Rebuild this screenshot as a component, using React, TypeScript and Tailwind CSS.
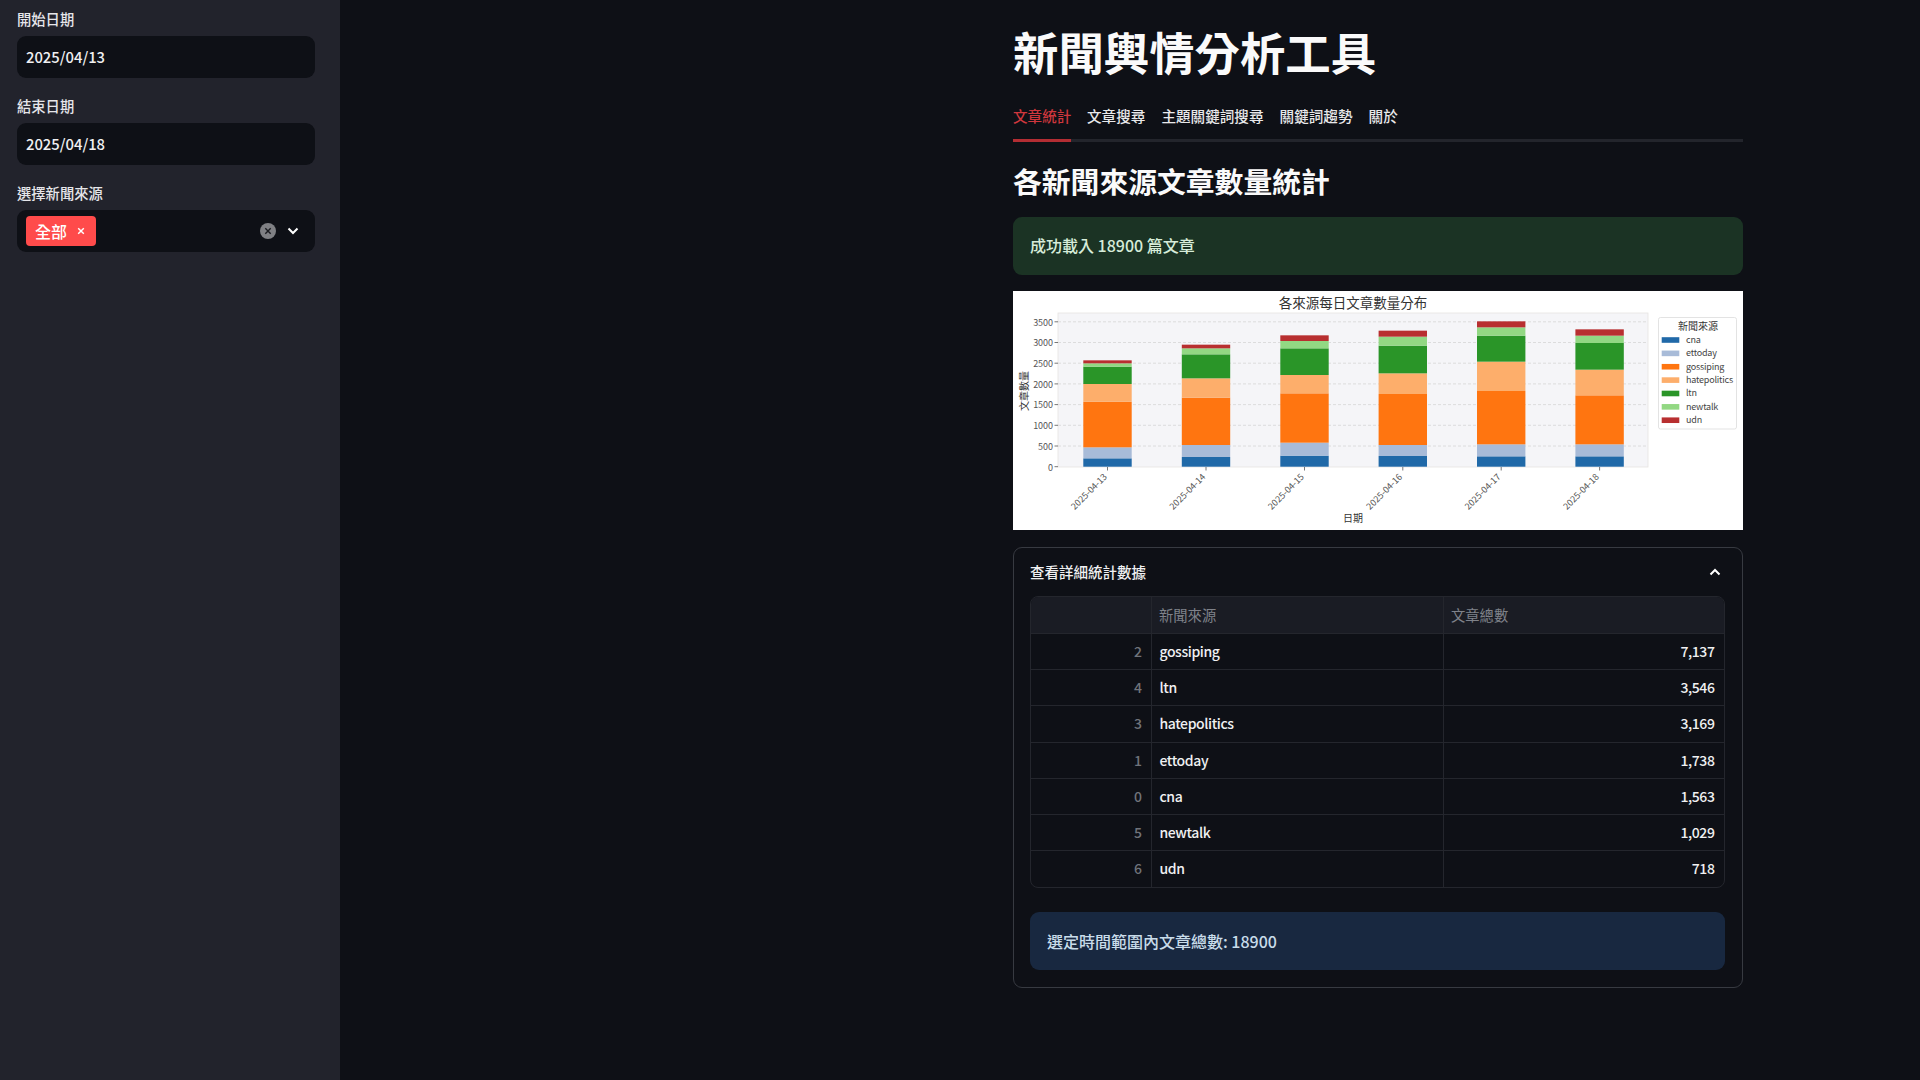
import React from "react";

const COLORS = ["#2069a8", "#a8bbd8", "#ff7510", "#fdae6b", "#2a9528", "#92d883", "#b82f30"];
const NAMES = ["cna", "ettoday", "gossiping", "hatepolitics", "ltn", "newtalk", "udn"];
const BARS = [
  { x: 1083.3, tops: [520, 487, 350, 297, 245, 235, 226], date: "2025-04-13" },
  { x: 1181.8, tops: [516, 480, 338, 280, 208, 190, 179], date: "2025-04-14" },
  { x: 1280.3, tops: [512, 473, 325, 270, 190, 168, 151], date: "2025-04-15" },
  { x: 1378.6, tops: [513, 480, 327, 265, 182, 155, 137], date: "2025-04-16" },
  { x: 1477, tops: [514, 478, 318, 230, 152, 127, 109], date: "2025-04-17" },
  { x: 1575.4, tops: [514, 478, 331, 254, 174, 152, 133], date: "2025-04-18" },
];
const TICKS = [0, 500, 1000, 1500, 2000, 2500, 3000, 3500];
const ROWS: [string, string, string][] = [
  ["2", "gossiping", "7,137"],
  ["4", "ltn", "3,546"],
  ["3", "hatepolitics", "3,169"],
  ["1", "ettoday", "1,738"],
  ["0", "cna", "1,563"],
  ["5", "newtalk", "1,029"],
  ["6", "udn", "718"],
];

function Chart() {
  const base = 466.7;
  const y = (zy: number) => zy / 3 + 285;
  return (
    <svg viewBox="1013 291 730 239" width={730} height={239} className="block bg-white" style={{ fontFamily: "'Noto Sans CJK TC', sans-serif" }}>
      <rect x={1058} y={313} width={590} height={154} fill="#f5f5f8" stroke="#e6e3e0" strokeWidth={0.8} />
      {TICKS.map((t) => {
        const ty = base - t * 0.0414;
        return (
          <g key={t}>
            {t > 0 && <line x1={1058} x2={1648} y1={ty} y2={ty} stroke="#d6d6d6" strokeWidth={0.8} strokeDasharray="3 2" />}
            <line x1={1054.5} x2={1058} y1={ty} y2={ty} stroke="#555" strokeWidth={0.8} />
            <text x={1052.8} y={ty + 3.8} textAnchor="end" fontSize={9} letterSpacing={-0.1} fill="#555">{t}</text>
          </g>
        );
      })}
      {BARS.map((b) => {
        const cx = b.x + 24.2;
        return (
          <g key={b.date}>
            {b.tops.map((zt, i) => {
              const top = y(zt);
              const bottom = i === 0 ? base : y(b.tops[i - 1]);
              return <rect key={i} x={b.x} y={top} width={48.4} height={bottom - top} fill={COLORS[i]} />;
            })}
            <line x1={cx} x2={cx} y1={467} y2={470.5} stroke="#555" strokeWidth={0.8} />
            <text x={cx} y={477.5} textAnchor="end" fontSize={9} fill="#555" transform={`rotate(-45 ${cx} 477.5)`}>{b.date}</text>
          </g>
        );
      })}
      <text x={1353} y={308} textAnchor="middle" fontSize={13.5} fill="#333">各來源每日文章數量分布</text>
      <text x={1353} y={522} textAnchor="middle" fontSize={10} fill="#333">日期</text>
      <text x={1028} y={391} textAnchor="middle" fontSize={10} fill="#333" transform="rotate(-90 1028 391)">文章數量</text>
      <rect x={1658.5} y={317.5} width={78} height={111.5} rx={2} fill="#fff" stroke="#dcdcdc" strokeWidth={0.8} />
      <text x={1698} y={329.5} textAnchor="middle" fontSize={10} fill="#333">新聞來源</text>
      {NAMES.map((n, i) => {
        const ly = 340 + i * 13.37;
        return (
          <g key={n}>
            <rect x={1661.7} y={ly - 2.8} width={17.6} height={5.6} fill={COLORS[i]} />
            <text x={1686} y={ly + 3} fontSize={9} letterSpacing={-0.2} fill="#444">{n}</text>
          </g>
        );
      })}
    </svg>
  );
}

function DateField({ label, value, mt }: { label: string; value: string; mt: string }) {
  return (
    <div className={mt}>
      <div className="h-[20px] text-[14.3px] font-medium leading-[20px] text-[#e6e6ea]">{label}</div>
      <div className="mt-[7px] flex h-[42px] items-center rounded-[9px] bg-[#0e1016] pl-[9px] text-[14.8px] font-medium text-[#f0f0f2]">{value}</div>
    </div>
  );
}

export default function App() {
  return (
    <div className="flex h-[1080px] w-[1920px] overflow-hidden bg-[#0e1016] font-['Noto_Sans_CJK_TC',sans-serif] text-[#fafafa]">
      <aside className="h-full w-[340px] shrink-0 bg-[#22232c] pl-[17px] pr-[25px] pt-[9px]">
        <DateField label="開始日期" value="2025/04/13" mt="mt-0" />
        <DateField label="結束日期" value="2025/04/18" mt="mt-[18px]" />
        <div className="mt-[18px]">
          <div className="h-[20px] text-[14.3px] font-medium leading-[20px] text-[#e6e6ea]">選擇新聞來源</div>
          <div className="mt-[7px] flex h-[42px] items-center rounded-[9px] bg-[#0e1016] pl-[9px] pr-[16px]">
            <div className="flex h-[30px] w-[70px] items-center rounded-[4px] bg-[#ff4b4b] pl-[9px] text-[16px] font-medium text-white">
              <span>全部</span>
              <svg viewBox="0 0 10 10" className="ml-[10px] h-[8px] w-[8px]" fill="none" stroke="#fff" strokeWidth={1.8}>
                <path d="M1.5 1.5l7 7M8.5 1.5l-7 7" />
              </svg>
            </div>
            <div className="ml-auto flex items-center gap-[11px]">
              <svg viewBox="0 0 16 16" className="h-[16px] w-[16px]">
                <circle cx={8} cy={8} r={8} fill="#7f8084" />
                <path d="M5.3 5.3l5.4 5.4M10.7 5.3l-5.4 5.4" stroke="#1a1b20" strokeWidth={1.4} />
              </svg>
              <svg viewBox="0 0 12 8" className="h-[8px] w-[12px]" fill="none" stroke="#fff" strokeWidth={2}>
                <path d="M1.5 1.5L6 6l4.5-4.5" />
              </svg>
            </div>
          </div>
        </div>
      </aside>
      <main className="ml-[673px] w-[730px] shrink-0">
        <h1 className="mt-[21px] h-[60px] text-[45.4px] font-bold leading-[60px] text-[#fafafa]">新聞輿情分析工具</h1>
        <div className="mt-[22.5px] flex h-[38px] gap-[16px] border-b-[3px] border-[#23252c]">
          <div className="relative h-[38px] w-[58px] whitespace-nowrap text-[14.6px] font-medium leading-[24px] text-[#cf373d]">
            文章統計
            <div className="absolute bottom-0 left-0 h-[3px] w-full bg-[#b32d33]" />
          </div>
          <div className="whitespace-nowrap text-[14.6px] font-medium leading-[24px] text-[#e8e8ea]">文章搜尋</div>
          <div className="whitespace-nowrap text-[14.6px] font-medium leading-[24px] text-[#e8e8ea]">主題關鍵詞搜尋</div>
          <div className="whitespace-nowrap text-[14.6px] font-medium leading-[24px] text-[#e8e8ea]">關鍵詞趨勢</div>
          <div className="whitespace-nowrap text-[14.6px] font-medium leading-[24px] text-[#e8e8ea]">關於</div>
        </div>
        <h2 className="mt-[19px] h-[40px] text-[28.8px] font-bold leading-[40px] text-[#fafafa]">各新聞來源文章數量統計</h2>
        <div className="mt-[16.5px] flex h-[58px] items-center rounded-[9px] bg-[#1b3324] pb-[2px] pl-[17px] text-[16px] font-medium text-[#d6ecd9]">成功載入 18900 篇文章</div>
        <div className="mt-[16px] overflow-hidden">
          <Chart />
        </div>
        <section className="mt-[17px] h-[441px] rounded-[9px] border-[1.5px] border-[#373a41] pl-[16px] pr-[17px]">
          <div className="flex h-[48px] items-center justify-between">
            <span className="text-[14.5px] font-medium text-[#f0f0f2]">查看詳細統計數據</span>
            <svg viewBox="0 0 12 8" className="mr-[4px] h-[8px] w-[12px]" fill="none" stroke="#fff" strokeWidth={2}>
              <path d="M1.5 6.5L6 2l4.5 4.5" />
            </svg>
          </div>
          <div className="overflow-hidden rounded-[8px] border border-[#24262d]">
            <div className="flex h-[37px] border-b border-[#24262d] bg-[#1a1c24] text-[14.3px] leading-[35px] text-[#7f828a]">
              <div className="w-[121px] border-r border-[#24262d]" />
              <div className="w-[292px] border-r border-[#24262d] pl-[7px]">新聞來源</div>
              <div className="flex-1 pl-[7px]">文章總數</div>
            </div>
            {ROWS.map((r, i) => (
              <div key={r[1]} className={i < 6 ? "flex h-[36.2px] border-b border-[#24262d] text-[14px] font-medium leading-[35px] tracking-[-0.4px]" : "flex h-[36px] text-[14px] font-medium leading-[35px] tracking-[-0.4px]"}>
                <div className="w-[121px] border-r border-[#24262d] pr-[9.5px] text-right text-[#70737a]">{r[0]}</div>
                <div className="w-[292px] border-r border-[#24262d] pl-[7.5px] text-[#f0f0f2]">{r[1]}</div>
                <div className="flex-1 pr-[9.5px] text-right text-[#f0f0f2]">{r[2]}</div>
              </div>
            ))}
          </div>
          <div className="mt-[24px] flex h-[58px] items-center rounded-[9px] bg-[#182840] pl-[17px] text-[16px] font-medium text-[#c8dcea]">選定時間範圍內文章總數: 18900</div>
        </section>
      </main>
    </div>
  );
}
